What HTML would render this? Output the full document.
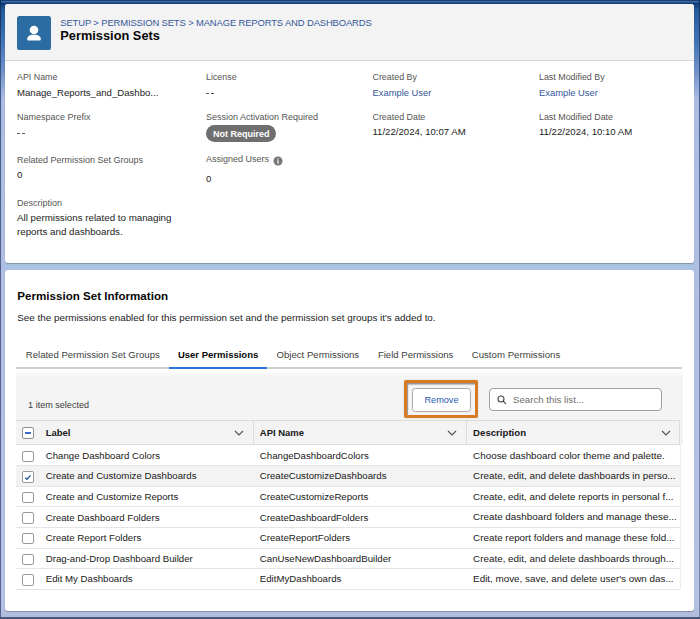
<!DOCTYPE html>
<html><head><meta charset="utf-8">
<style>
*{margin:0;padding:0;box-sizing:border-box;}
html,body{width:700px;height:619px;overflow:hidden;}
body{position:relative;font-family:"Liberation Sans", sans-serif;background:linear-gradient(180deg,#08295a 0px,#3b6aa4 1.5px,#0e3d78 3.5px,#245b9b 10px,#3f72b4 40px,#6f90c8 70px,#aebce2 100px,#b4c2e4 600px,#b0bcdc 619px);}
.t{position:absolute;white-space:nowrap;line-height:1;}
.card{position:absolute;background:#fff;border-radius:3px;}
.leftedge{position:absolute;left:0;top:0;width:1px;height:619px;background:linear-gradient(180deg,#0a2f5e,#3c5a8c 80px,#56648c 300px,#56648c);}
.rightedge{position:absolute;left:699px;top:0;width:1px;height:619px;background:linear-gradient(180deg,#0a2f5e,#3c5a8c 80px,#7a88b0 300px,#7a88b0);}
.bottomedge{position:absolute;left:0;top:617px;width:700px;height:2px;background:#4a5878;}
.cb{position:absolute;width:11px;height:11px;border:1px solid #9a9a9a;border-radius:2px;background:#fff;}
.chev{position:absolute;}
</style></head><body>
<div style="position:absolute;left:5px;top:262px;width:689px;height:8px;background:#a9c3e4;"></div><div class="leftedge"></div><div class="rightedge"></div><div class="bottomedge"></div>
<div class="card" style="left:4.5px;top:4px;width:689.5px;height:259px;box-shadow:0 1px 1px rgba(0,0,0,.25);">
  <div style="position:absolute;left:0;top:0;width:689.5px;height:57px;background:#f3f3f3;border-radius:3px 3px 0 0;border-bottom:1px solid #d8d8d8;"></div>
  <div style="position:absolute;left:12.5px;top:12px;width:34px;height:34px;background:#2b6da2;border-radius:2.5px;">
    <svg width="34" height="34" viewBox="0 0 34 34" style="position:absolute;left:0;top:0">
      <circle cx="17" cy="14" r="4.3" fill="#fff"/>
      <path d="M10.2 23.2 C10.2 20.2 13 18.8 17 18.8 C21 18.8 23.8 20.2 23.8 23.2 L23.8 23.6 Q23.8 24.6 22.8 24.6 L11.2 24.6 Q10.2 24.6 10.2 23.6 Z" fill="#fff"/>
    </svg>
  </div>
  <div style="position:absolute;left:201.5px;top:121.3px;width:70px;height:16.7px;background:#6f6f6f;border-radius:9px;"></div>
  <svg width="10" height="10" style="position:absolute;left:268px;top:151.8px" viewBox="0 0 10 10"><circle cx="5" cy="5" r="4.5" fill="#767676"/><rect x="4.4" y="4.2" width="1.2" height="3.4" fill="#fff"/><circle cx="5" cy="2.9" r="0.7" fill="#fff"/></svg>
</div>
<div class="card" style="left:5px;top:270px;width:689px;height:341px;box-shadow:0 1px 1px rgba(0,0,0,.25);">
  <!-- tabs border -->
  <div style="position:absolute;left:11px;top:96.9px;width:666px;height:2px;background:#d0d0d0;"></div>
  <div style="position:absolute;left:164px;top:96.6px;width:98px;height:2px;background:#2a76d6;"></div>
  <!-- table container -->
  <div style="position:absolute;left:11px;top:100px;width:666.5px;height:241px;background:linear-gradient(180deg,#fff 0px,#f4f4f4 6px);"></div>
  <div style="position:absolute;left:11px;top:150px;width:664px;height:25px;background:#f3f3f3;border-top:1px solid #dddbda;border-bottom:1px solid #dddbda;border-right:1px solid #dddbda;"></div>
  <div style="position:absolute;left:11px;top:175px;width:667px;height:166px;background:#fff;"></div>
  <div style="position:absolute;left:11px;top:195.6px;width:664px;height:20.6px;background:#f3f3f3;"></div>
</div>
<!-- header column dividers -->
<div style="position:absolute;left:253px;top:421px;width:1px;height:24px;background:#dddbda;"></div>
<div style="position:absolute;left:466px;top:421px;width:1px;height:24px;background:#dddbda;"></div>
<!-- row borders -->
<div style="position:absolute;left:16px;top:465.1px;width:664px;height:1px;background:#e5e5e5;"></div><div style="position:absolute;left:16px;top:485.7px;width:664px;height:1px;background:#e5e5e5;"></div><div style="position:absolute;left:16px;top:506.3px;width:664px;height:1px;background:#e5e5e5;"></div><div style="position:absolute;left:16px;top:526.9px;width:664px;height:1px;background:#e5e5e5;"></div><div style="position:absolute;left:16px;top:547.5px;width:664px;height:1px;background:#e5e5e5;"></div><div style="position:absolute;left:16px;top:568.1px;width:664px;height:1px;background:#e5e5e5;"></div><div style="position:absolute;left:16px;top:588.7px;width:664px;height:1px;background:#e5e5e5;"></div>
<div style="position:absolute;left:680px;top:445px;width:1px;height:144px;background:#eeeeee;"></div>
<!-- orange highlight -->
<div style="position:absolute;left:404px;top:380px;width:74px;height:38px;border:3px solid #d77a24;border-radius:2px;box-shadow:inset 1px 1.5px 1px rgba(0,0,0,.4),0 0 1px rgba(120,60,0,.5);"></div>
<div style="position:absolute;left:412px;top:388px;width:59px;height:23.5px;background:#fff;border:1px solid #a9a9a9;border-radius:3.5px;"></div>
<div style="position:absolute;left:488.5px;top:388.3px;width:173.3px;height:23px;background:#fff;border:1px solid #a0a0a0;border-radius:4px;"></div>
<svg width="12" height="12" viewBox="0 0 12 12" style="position:absolute;left:496.3px;top:394px"><circle cx="5" cy="5" r="3.0" fill="none" stroke="#444" stroke-width="1.1"/><line x1="7.2" y1="7.2" x2="9.6" y2="9.6" stroke="#444" stroke-width="1.2" stroke-linecap="round"/></svg>
<!-- header checkbox -->
<div class="cb" style="left:22.2px;top:427px;width:12px;height:12px;border-color:#8e8e8e;"></div>
<div style="position:absolute;left:25px;top:432.3px;width:6px;height:1.4px;background:#3a6cc8;"></div>
<div class="cb" style="left:22.2px;top:450.5px;width:11.6px;height:11.6px;"></div><div class="cb" style="left:22.2px;top:471.1px;width:11.6px;height:11.6px;"></div><div class="cb" style="left:22.2px;top:491.7px;width:11.6px;height:11.6px;"></div><div class="cb" style="left:22.2px;top:512.3px;width:11.6px;height:11.6px;"></div><div class="cb" style="left:22.2px;top:532.9px;width:11.6px;height:11.6px;"></div><div class="cb" style="left:22.2px;top:553.5px;width:11.6px;height:11.6px;"></div><div class="cb" style="left:22.2px;top:574.1px;width:11.6px;height:11.6px;"></div>
<svg width="8" height="8" viewBox="0 0 8 8" style="position:absolute;left:24px;top:472.5px"><path d="M1.2 4.8 L2.9 6.3 L6.6 2.4" fill="none" stroke="#22539e" stroke-width="1.35"/></svg>
<!-- chevrons -->
<svg width="10" height="6" viewBox="0 0 10 6" style="position:absolute;left:233.9px;top:430px"><path d="M1 1 L5 5 L9 1" fill="none" stroke="#555" stroke-width="1.2"/></svg><svg width="10" height="6" viewBox="0 0 10 6" style="position:absolute;left:447.3px;top:430px"><path d="M1 1 L5 5 L9 1" fill="none" stroke="#555" stroke-width="1.2"/></svg><svg width="10" height="6" viewBox="0 0 10 6" style="position:absolute;left:661px;top:430px"><path d="M1 1 L5 5 L9 1" fill="none" stroke="#555" stroke-width="1.2"/></svg>
<div class="t" style="left:60.3px;top:18.30px;font-size:9.45px;color:#34579a;letter-spacing:-0.14px;">SETUP &gt; PERMISSION SETS &gt; MANAGE REPORTS AND DASHBOARDS</div>
<div class="t" style="left:60.3px;top:29.76px;font-size:12.8px;color:#080707;font-weight:bold;-webkit-text-stroke:0;">Permission Sets</div>
<div class="t" style="left:17px;top:73.17px;font-size:8.9px;color:#555452;">API Name</div>
<div class="t" style="left:17px;top:88.47px;font-size:9.6px;color:#222222;">Manage_Reports_and_Dashbo...</div>
<div class="t" style="left:17px;top:112.58px;font-size:9.0px;color:#555452;">Namespace Prefix</div>
<div style="position:absolute;left:16.8px;top:132.6px;width:3.2px;height:1.2px;background:#5a5a5a"></div>
<div style="position:absolute;left:21.6px;top:132.6px;width:3.3px;height:1.2px;background:#5a5a5a"></div>
<div class="t" style="left:17px;top:155.58px;font-size:9.0px;color:#555452;">Related Permission Set Groups</div>
<div class="t" style="left:17px;top:170.37px;font-size:9.6px;color:#222222;">0</div>
<div class="t" style="left:17px;top:198.78px;font-size:9.0px;color:#555452;">Description</div>
<div class="t" style="left:17px;top:213.25px;font-size:9.75px;color:#222222;">All permissions related to managing</div>
<div class="t" style="left:17px;top:226.75px;font-size:9.75px;color:#222222;">reports and dashboards.</div>
<div class="t" style="left:206px;top:73.47px;font-size:8.9px;color:#555452;">License</div>
<div style="position:absolute;left:206.1px;top:93.0px;width:3.3px;height:1.2px;background:#5a5a5a"></div>
<div style="position:absolute;left:210.9px;top:93.0px;width:3.3px;height:1.2px;background:#5a5a5a"></div>
<div class="t" style="left:206px;top:112.78px;font-size:9.0px;color:#555452;">Session Activation Required</div>
<div class="t" style="left:206px;top:155.38px;font-size:9.0px;color:#555452;">Assigned Users</div>
<div class="t" style="left:206px;top:173.97px;font-size:9.6px;color:#222222;">0</div>
<div class="t" style="left:372.5px;top:73.27px;font-size:8.9px;color:#555452;">Created By</div>
<div class="t" style="left:372.5px;top:88.34px;font-size:9.4px;color:#34579a;">Example User</div>
<div class="t" style="left:372.5px;top:112.67px;font-size:8.9px;color:#555452;">Created Date</div>
<div class="t" style="left:372.5px;top:127.47px;font-size:9.6px;color:#222222;">11/22/2024, 10:07 AM</div>
<div class="t" style="left:539px;top:73.27px;font-size:8.9px;color:#555452;">Last Modified By</div>
<div class="t" style="left:539px;top:88.34px;font-size:9.4px;color:#34579a;">Example User</div>
<div class="t" style="left:539px;top:112.67px;font-size:8.9px;color:#555452;">Last Modified Date</div>
<div class="t" style="left:539px;top:127.47px;font-size:9.6px;color:#222222;">11/22/2024, 10:10 AM</div>
<div class="t" style="left:17.3px;top:290.08px;font-size:11.6px;color:#080707;font-weight:bold;-webkit-text-stroke:0;">Permission Set Information</div>
<div class="t" style="left:17.3px;top:313.46px;font-size:9.85px;color:#222222;">See the permissions enabled for this permission set and the permission set groups it's added to.</div>
<div class="t" style="left:25.8px;top:349.60px;font-size:9.57px;color:#3e3e3c;">Related Permission Set Groups</div>
<div class="t" style="left:177.9px;top:349.63px;font-size:9.53px;color:#080707;font-weight:bold;-webkit-text-stroke:0;">User Permissions</div>
<div class="t" style="left:276.5px;top:349.57px;font-size:9.6px;color:#3e3e3c;">Object Permissions</div>
<div class="t" style="left:377.9px;top:349.60px;font-size:9.57px;color:#3e3e3c;">Field Permissions</div>
<div class="t" style="left:471.7px;top:349.51px;font-size:9.67px;color:#3e3e3c;">Custom Permissions</div>
<div class="t" style="left:28.1px;top:400.62px;font-size:9.07px;color:#3e3e3c;">1 item selected</div>
<div class="t" style="left:424.5px;top:396.07px;font-size:9.13px;color:#2a5bb0;">Remove</div>
<div class="t" style="left:513px;top:395.41px;font-size:9.68px;color:#706e6b;">Search this list...</div>
<div class="t" style="left:45.8px;top:427.79px;font-size:9.46px;color:#181818;font-weight:bold;-webkit-text-stroke:0;">Label</div>
<div class="t" style="left:259.8px;top:427.88px;font-size:9.47px;color:#181818;font-weight:bold;-webkit-text-stroke:0;">API Name</div>
<div class="t" style="left:473.1px;top:427.74px;font-size:9.64px;color:#181818;font-weight:bold;-webkit-text-stroke:0;">Description</div>
<div class="t" style="left:45.7px;top:450.72px;font-size:9.66px;color:#181818;">Change Dashboard Colors</div>
<div class="t" style="left:259.8px;top:450.72px;font-size:9.66px;color:#181818;">ChangeDashboardColors</div>
<div class="t" style="left:473.1px;top:450.56px;font-size:9.85px;color:#181818;">Choose dashboard color theme and palette.</div>
<div class="t" style="left:45.7px;top:471.32px;font-size:9.66px;color:#181818;">Create and Customize Dashboards</div>
<div class="t" style="left:259.8px;top:471.32px;font-size:9.66px;color:#181818;">CreateCustomizeDashboards</div>
<div class="t" style="left:473.1px;top:471.16px;font-size:9.85px;color:#181818;">Create, edit, and delete dashboards in perso...</div>
<div class="t" style="left:45.7px;top:491.92px;font-size:9.66px;color:#181818;">Create and Customize Reports</div>
<div class="t" style="left:259.8px;top:491.92px;font-size:9.66px;color:#181818;">CreateCustomizeReports</div>
<div class="t" style="left:473.1px;top:491.76px;font-size:9.85px;color:#181818;">Create, edit, and delete reports in personal f...</div>
<div class="t" style="left:45.7px;top:512.52px;font-size:9.66px;color:#181818;">Create Dashboard Folders</div>
<div class="t" style="left:259.8px;top:512.52px;font-size:9.66px;color:#181818;">CreateDashboardFolders</div>
<div class="t" style="left:473.1px;top:512.36px;font-size:9.85px;color:#181818;">Create dashboard folders and manage these...</div>
<div class="t" style="left:45.7px;top:533.12px;font-size:9.66px;color:#181818;">Create Report Folders</div>
<div class="t" style="left:259.8px;top:533.12px;font-size:9.66px;color:#181818;">CreateReportFolders</div>
<div class="t" style="left:473.1px;top:532.96px;font-size:9.85px;color:#181818;">Create report folders and manage these fold...</div>
<div class="t" style="left:45.7px;top:553.72px;font-size:9.66px;color:#181818;">Drag-and-Drop Dashboard Builder</div>
<div class="t" style="left:259.8px;top:553.72px;font-size:9.66px;color:#181818;">CanUseNewDashboardBuilder</div>
<div class="t" style="left:473.1px;top:553.56px;font-size:9.85px;color:#181818;">Create, edit, and delete dashboards through...</div>
<div class="t" style="left:45.7px;top:574.32px;font-size:9.66px;color:#181818;">Edit My Dashboards</div>
<div class="t" style="left:259.8px;top:574.32px;font-size:9.66px;color:#181818;">EditMyDashboards</div>
<div class="t" style="left:473.1px;top:574.16px;font-size:9.85px;color:#181818;">Edit, move, save, and delete user's own das...</div>
<div class="t" style="left:213px;top:129.78px;font-size:9.0px;color:#fff;font-weight:bold;">Not Required</div>
</body></html>
